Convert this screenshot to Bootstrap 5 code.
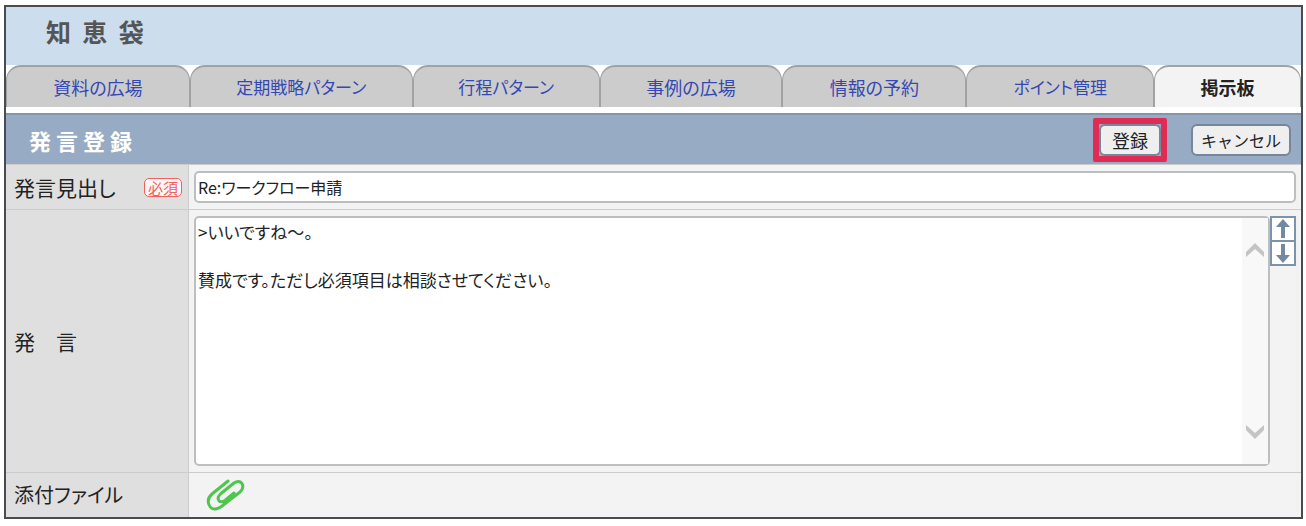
<!DOCTYPE html>
<html lang="ja">
<head>
<meta charset="utf-8">
<meta name="viewport" content="width=device-width, initial-scale=1">
<title>知恵袋 - 発言登録</title>
<link href="https://cdn.jsdelivr.net/npm/bootstrap@5.3.0/dist/css/bootstrap.min.css" rel="stylesheet">
<style>
  body { font-family: "Noto Sans CJK JP", sans-serif; font-feature-settings: "palt"; color: #222; background: #fff; }
  .window-frame { margin: 5px 3px 6px 4px; border: 2px solid #484b50; }
  .app-header { background: #ccdded; height: 58px; padding: 4px 40px; }
  .app-title { font-size: 25px; line-height: 40px; font-weight: 700; color: #555; }
  .tab-strip { display: grid; grid-template-columns: 184fr 223fr 187fr 183fr 184fr 188fr 147fr; }
  .tab-strip .nav-link { display: block; height: 42px; padding: 0; text-align: center; font-size: 18px; line-height: 40px; white-space: nowrap;
    color: #3448b4; background: #ccc; border: 2px solid #a0a2a4; border-bottom: 0; border-left-width: 1px; border-right-width: 1px; border-radius: 15px 15px 0 0; }
  .tab-strip .nav-link.kana { font-size: 17px; }
  .tab-strip .nav-link.active { color: #222; background: #f3f3f3; font-weight: 700; }
  .section-bar { background: #98abc4; border-top: 2px solid #8397ac; margin-top: 6px; height: 51px; padding: 0 10px 0 23px; }
  .section-title { font-size: 22px; line-height: 32px; font-weight: 700; color: #fff; }
  .btn-form { height: 32px; padding: 0 11px; font-size: 18px; line-height: 26px; color: #222; background: #efefef; border: 2px solid #77879b; border-radius: 6px; }
  .btn-form.kana { font-size: 16px; padding: 0 8px; }
  .btn-form:hover { background: #fff; }
  .marked { border: 6px solid #e02c54; border-radius: 2px; }
  .form-line { display: grid; grid-template-columns: 183px 1fr; background: #f3f3f3; border-top: 1px solid #ccc; }
  .line-label { background: #dfdfdf; border-right: 1px solid #ccc; padding: 0 6px 0 8px; min-height: 44px; font-size: 21px; line-height: 32px; white-space: nowrap; }
  .line-label .kana { font-size: 20px; }
  .line-body { padding: 6px 5px 6px 5px; }
  .required-tag { font-size: 15px; line-height: 17px; color: #f0605c; background: #fff5f5; border: 1px solid #f0605c; border-radius: 5px; padding: 0 3px; }
  .entry { font-size: 17px; line-height: 24px; color: #222; background: #fff; border: 2px solid #bcbec0; border-radius: 5px; padding: 2px; font-feature-settings: "palt"; }
  input.entry { font-size: 16px; }
  textarea.entry { resize: none; overflow: hidden; display: block; padding: 2px 2px 4px; }
  .scroll-track { position: absolute; top: 2px; right: 2px; bottom: 2px; width: 26px; background: #f8f8f8; padding: 24px 4px; }
  .size-btn { width: 26px; height: 26px; padding: 0; background: #fff; border: 2px solid #7b93ab; display: block; line-height: 0; }
  .size-btn + .size-btn { margin-top: -2px; }
</style>
</head>
<body>
<div class="window-frame">
  <header class="app-header">
    <h1 class="app-title m-0">知&nbsp; 恵&nbsp; 袋</h1>
  </header>
  <nav class="tab-strip" aria-label="メニュー">
    <a class="nav-link" href="#">資料の広場</a>
    <a class="nav-link kana" href="#">定期戦略パターン</a>
    <a class="nav-link kana" href="#">行程パターン</a>
    <a class="nav-link" href="#">事例の広場</a>
    <a class="nav-link" href="#">情報の予約</a>
    <a class="nav-link kana" href="#">ポイント管理</a>
    <a class="nav-link active" aria-current="page" href="#">掲示板</a>
  </nav>
  <form>
    <div class="section-bar d-flex align-items-center justify-content-between">
      <h2 class="section-title m-0">発 言 登 録</h2>
      <div class="d-flex align-items-center">
        <div class="marked me-4"><button type="submit" class="btn btn-form d-block">登録</button></div>
        <button type="button" class="btn btn-form kana">キャンセル</button>
      </div>
    </div>
    <div class="form-line">
      <div class="line-label d-flex align-items-center justify-content-between">
        <label for="subject">発言見出し</label>
        <span class="required-tag">必須</span>
      </div>
      <div class="line-body">
        <input type="text" id="subject" class="entry w-100 d-block" value="Re:ワークフロー申請">
      </div>
    </div>
    <div class="form-line">
      <div class="line-label d-flex align-items-center">
        <label for="message">発　言</label>
      </div>
      <div class="line-body d-flex align-items-start">
        <div class="position-relative flex-grow-1">
          <textarea id="message" class="entry w-100" rows="10">&gt;いいですね～。

賛成です。ただし必須項目は相談させてください。</textarea>
          <div class="scroll-track d-flex flex-column justify-content-between" aria-hidden="true">
            <svg width="18" height="16" viewBox="0 0 18 16"><path d="M0 10 9 1l9 9v5L9 7l-9 8z" fill="#c4c4c4"/></svg>
            <svg width="18" height="16" viewBox="0 0 18 16"><path d="M0 6l9 9 9-9V1L9 9 0 1z" fill="#c4c4c4"/></svg>
          </div>
        </div>
        <div>
          <button type="button" class="size-btn" aria-label="縮小"><svg width="22" height="22" viewBox="0 0 22 22"><path d="M11 1l7 8h-5v11H9V9H4z" fill="#7189a1"/></svg></button>
          <button type="button" class="size-btn" aria-label="拡大"><svg width="22" height="22" viewBox="0 0 22 22"><path d="M11 21l7-8h-5V2H9v11H4z" fill="#7189a1"/></svg></button>
        </div>
      </div>
    </div>
    <div class="form-line">
      <div class="line-label d-flex align-items-center">
        <label class="kana" for="attach">添付ファイル</label>
      </div>
      <div class="line-body d-flex align-items-center">
        <button type="button" id="attach" class="btn p-0 border-0 ms-2" aria-label="添付ファイル">
          <svg class="d-block mx-1" width="40" height="32" viewBox="0 0 40 32" fill="none" stroke="#4cc64c" stroke-width="3" stroke-linecap="round" stroke-linejoin="round"><path d="M22 2 6 15C-1 21 3 31 10 30c3-.5 4-1.500 6-3L34 13C40 7 35-1 28 4L15 14.500C9 20 14 25.500 19 21.500L28 14"/></svg>
        </button>
      </div>
    </div>
  </form>
</div>
<script src="https://cdn.jsdelivr.net/npm/bootstrap@5.3.0/dist/js/bootstrap.bundle.min.js"></script>
</body>
</html>
